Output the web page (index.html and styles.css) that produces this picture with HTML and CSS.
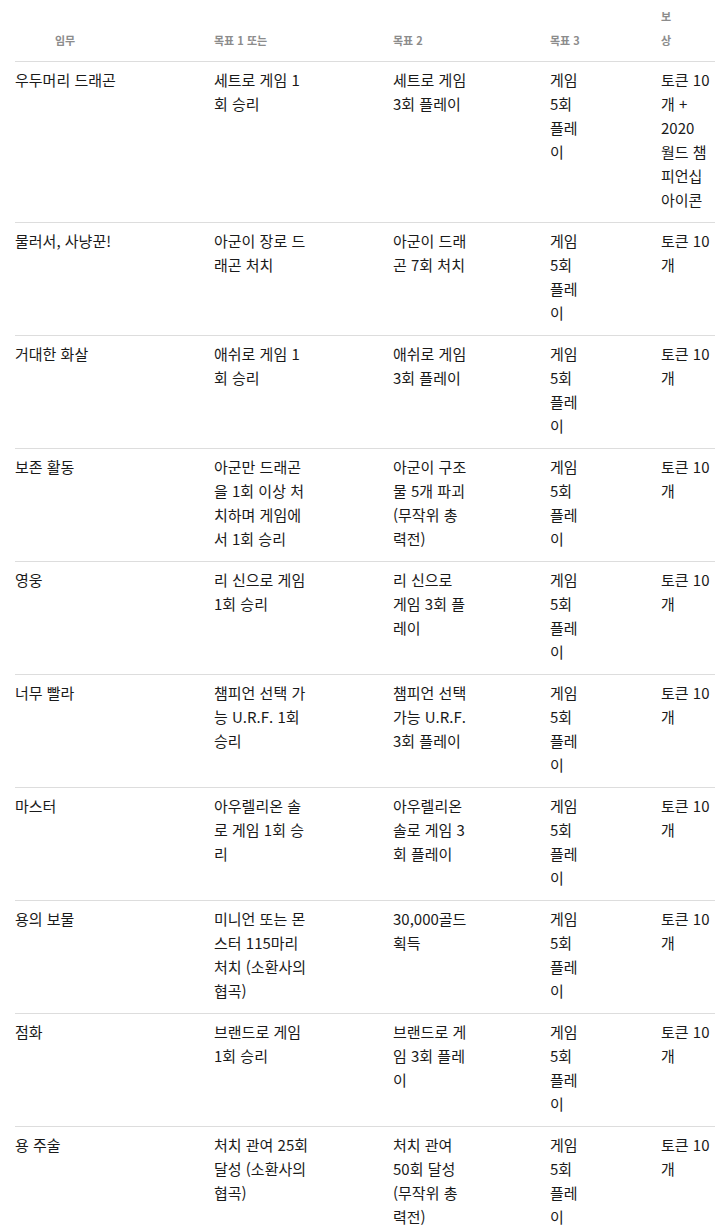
FILE: index.html
```html
<!DOCTYPE html>
<html lang="ko">
<head>
<meta charset="utf-8">
<title>임무</title>
<link rel="stylesheet" href="styles.css">
</head>
<body>
<div class="wrap">
<table class="missions">
  <colgroup>
    <col class="c1"><col class="c2"><col class="c3"><col class="c4"><col class="c5">
  </colgroup>
  <thead>
    <tr>
      <th class="first">임무</th>
      <th>목표 1 또는</th>
      <th>목표 2</th>
      <th>목표 3</th>
      <th>보<br>상</th>
    </tr>
  </thead>
  <tbody>
    <tr>
      <td>우두머리 드래곤</td>
      <td>세트로 게임 1<br>회 승리</td>
      <td>세트로 게임<br>3회 플레이</td>
      <td>게임<br>5회<br>플레<br>이</td>
      <td>토큰 10<br>개 +<br>2020<br>월드 챔<br>피언십<br>아이콘</td>
    </tr>
    <tr>
      <td>물러서, 사냥꾼!</td>
      <td>아군이 장로 드<br>래곤 처치</td>
      <td>아군이 드래<br>곤 7회 처치</td>
      <td>게임<br>5회<br>플레<br>이</td>
      <td>토큰 10<br>개</td>
    </tr>
    <tr>
      <td>거대한 화살</td>
      <td>애쉬로 게임 1<br>회 승리</td>
      <td>애쉬로 게임<br>3회 플레이</td>
      <td>게임<br>5회<br>플레<br>이</td>
      <td>토큰 10<br>개</td>
    </tr>
    <tr>
      <td>보존 활동</td>
      <td>아군만 드래곤<br>을 1회 이상 처<br>치하며 게임에<br>서 1회 승리</td>
      <td>아군이 구조<br>물 5개 파괴<br>(무작위 총<br>력전)</td>
      <td>게임<br>5회<br>플레<br>이</td>
      <td>토큰 10<br>개</td>
    </tr>
    <tr>
      <td>영웅</td>
      <td>리 신으로 게임<br>1회 승리</td>
      <td>리 신으로<br>게임 3회 플<br>레이</td>
      <td>게임<br>5회<br>플레<br>이</td>
      <td>토큰 10<br>개</td>
    </tr>
    <tr>
      <td>너무 빨라</td>
      <td>챔피언 선택 가<br>능 U.R.F. 1회<br>승리</td>
      <td>챔피언 선택<br>가능 U.R.F.<br>3회 플레이</td>
      <td>게임<br>5회<br>플레<br>이</td>
      <td>토큰 10<br>개</td>
    </tr>
    <tr>
      <td>마스터</td>
      <td>아우렐리온 솔<br>로 게임 1회 승<br>리</td>
      <td>아우렐리온<br>솔로 게임 3<br>회 플레이</td>
      <td>게임<br>5회<br>플레<br>이</td>
      <td>토큰 10<br>개</td>
    </tr>
    <tr>
      <td>용의 보물</td>
      <td>미니언 또는 몬<br>스터 115마리<br>처치 (소환사의<br>협곡)</td>
      <td>30,000골드<br>획득</td>
      <td>게임<br>5회<br>플레<br>이</td>
      <td>토큰 10<br>개</td>
    </tr>
    <tr>
      <td>점화</td>
      <td>브랜드로 게임<br>1회 승리</td>
      <td>브랜드로 게<br>임 3회 플레<br>이</td>
      <td>게임<br>5회<br>플레<br>이</td>
      <td>토큰 10<br>개</td>
    </tr>
    <tr>
      <td>용 주술</td>
      <td>처치 관여 25회<br>달성 (소환사의<br>협곡)</td>
      <td>처치 관여<br>50회 달성<br>(무작위 총<br>력전)</td>
      <td>게임<br>5회<br>플레<br>이</td>
      <td>토큰 10<br>개</td>
    </tr>
  </tbody>
</table>
</div>
</body>
</html>
```
FILE: styles.css
```css
html, body {
  margin: 0;
  padding: 0;
  background: #ffffff;
}

body {
  font-family: "Noto Sans CJK KR", "Noto Sans", sans-serif;
  color: #1a1a1a;
}

.wrap {
  padding: 0 13px 0 15px;
}

.missions {
  width: 700px;
  border-collapse: collapse;
  table-layout: fixed;
}

.c1 { width: 199px; }
.c2 { width: 179px; }
.c3 { width: 157px; }
.c4 { width: 111px; }
.c5 { width: 54px; }

.missions th {
  font-size: 11px;
  font-weight: 700;
  color: #8c8c8c;
  line-height: 24px;
  text-align: left;
  vertical-align: bottom;
  padding: 4px 0 9px 0;
  border-bottom: 1px solid #dddddd;
  white-space: nowrap;
}

.missions th.first {
  padding-left: 40px;
}

.missions td {
  font-size: 15px;
  line-height: 24px;
  vertical-align: top;
  padding: 6px 0 10px 0;
  border-bottom: 1px solid #dddddd;
  white-space: nowrap;
}
```
